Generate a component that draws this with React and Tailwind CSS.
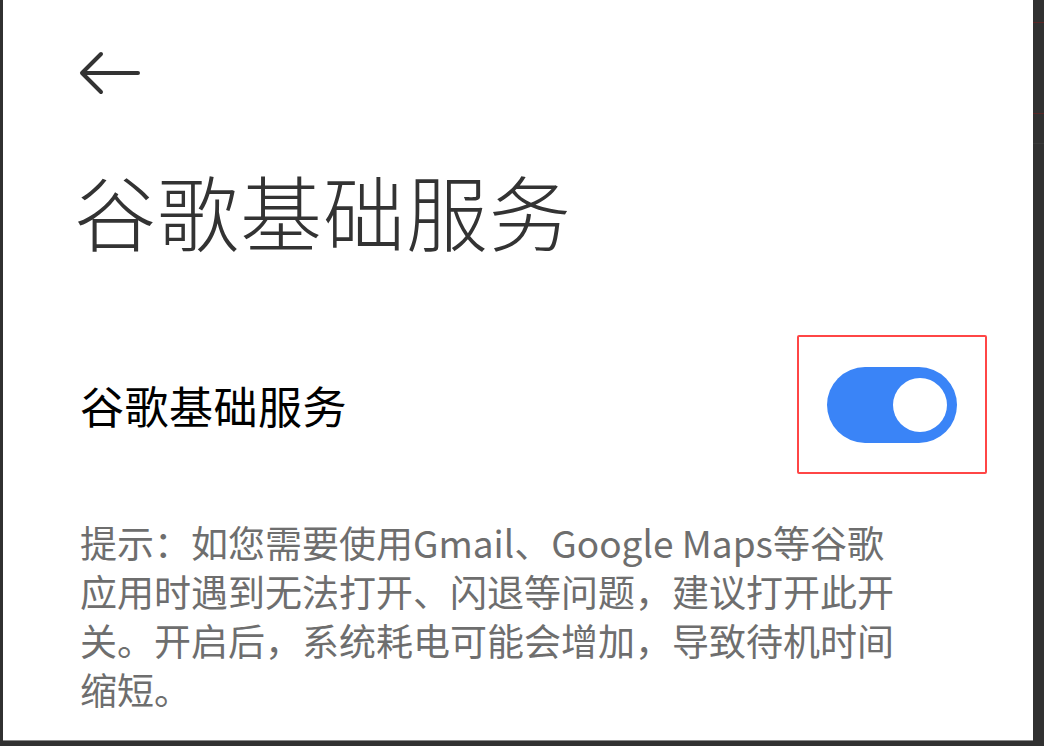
import { useState } from 'react'

const FONT = '"Noto Sans CJK SC", "Noto Sans", sans-serif'

const HINT_LINES = [
  '提示：如您需要使用Gmail、Google Maps等谷歌',
  '应用时遇到无法打开、闪退等问题，建议打开此开',
  '关。开启后，系统耗电可能会增加，导致待机时间',
  '缩短。',
]

function BackArrow() {
  return (
    <svg width="64" height="44" viewBox="0 0 64 44" fill="none" className="-ml-[2px] block">
      <path
        d="M60 22H5M23 3L4 22L23 41"
        stroke="#333333"
        strokeWidth="4"
        strokeLinecap="round"
        strokeLinejoin="round"
      />
    </svg>
  )
}

function Toggle({ on, onChange }) {
  return (
    <button
      type="button"
      onClick={() => onChange(!on)}
      className={`flex h-[76px] w-[130px] items-center rounded-full px-[10px] ${
        on ? 'justify-end bg-[#3a84f7]' : 'justify-start bg-[#d9d9d9]'
      }`}
    >
      <span className="h-[54px] w-[54px] rounded-full bg-white" />
    </button>
  )
}

// thin dark strip on the right, with a couple of stray marks from the window behind
function RightStrip() {
  return (
    <div className="flex w-[11px] flex-col">
      <div className="h-[22px]" />
      <div className="h-px bg-[#5a2626]" />
      <div className="h-[90px]" />
      <div className="h-px bg-[#5a2626]" />
      <div className="h-[29px]" />
      <div className="h-px bg-[#3a3a3a]" />
    </div>
  )
}

export default function App() {
  const [enabled, setEnabled] = useState(true)

  return (
    <div className="flex h-[746px] w-[1044px] bg-[#313131] pl-[3px]" style={{ fontFamily: FONT }}>
      <div className="flex flex-col">
        <div className="h-[740px] w-[1030px] bg-white pl-[77px] pr-[46px] pt-[51px]">
          <BackArrow />

          <h1 className="-ml-[6px] mt-[74px] text-[82px] font-light leading-[82px] tracking-[1px] text-[#333333]">
            谷歌基础服务
          </h1>

          <div className="mt-[84px] flex items-center justify-between">
            <span className="text-[44px] leading-[60px] tracking-[0.5px] text-black">谷歌基础服务</span>
            <div className="flex h-[139px] w-[190px] items-center justify-center rounded-[2px] border-2 border-[#ff4646]">
              <Toggle on={enabled} onChange={setEnabled} />
            </div>
          </div>

          <p className="mt-[44px] text-[37px] leading-[49px] text-[#6e6e6e]">
            {HINT_LINES.map((line) => (
              <span key={line} className="block whitespace-nowrap">
                {line}
              </span>
            ))}
          </p>
        </div>
        <div className="h-px w-[1030px] bg-[#8a8a8a]" />
      </div>
      <RightStrip />
    </div>
  )
}
